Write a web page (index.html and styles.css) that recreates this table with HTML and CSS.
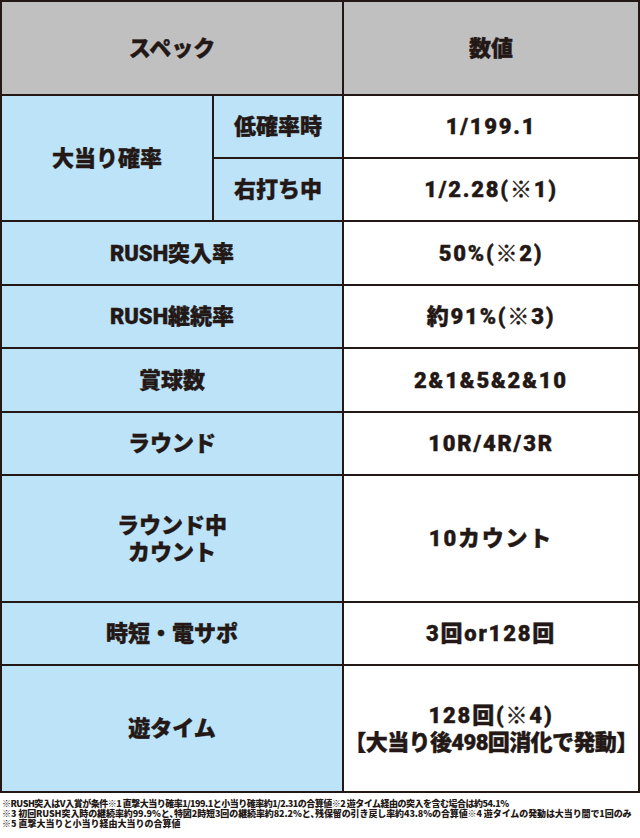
FILE: index.html
```html
<!DOCTYPE html>
<html lang="ja">
<head>
<meta charset="utf-8">
<title>スペック</title>
<link rel="stylesheet" href="styles.css">
</head>
<body>
<div class="spec">
  <div class="cell head span2">スペック</div>
  <div class="cell head">数値</div>

  <div class="cell label rows2">大当り確率</div>
  <div class="cell label">低確率時</div>
  <div class="cell value">1/199.1</div>
  <div class="cell label">右打ち中</div>
  <div class="cell value">1/2.28(※1)</div>

  <div class="cell label span2">RUSH突入率</div>
  <div class="cell value">50%(※2)</div>

  <div class="cell label span2">RUSH継続率</div>
  <div class="cell value">約91%(※3)</div>

  <div class="cell label span2">賞球数</div>
  <div class="cell value">2&amp;1&amp;5&amp;2&amp;10</div>

  <div class="cell label span2">ラウンド</div>
  <div class="cell value">10R/4R/3R</div>

  <div class="cell label span2"><div class="lines">ラウンド中<br>カウント</div></div>
  <div class="cell value">10カウント</div>

  <div class="cell label span2">時短・電サポ</div>
  <div class="cell value">3回or128回</div>

  <div class="cell label span2">遊タイム</div>
  <div class="cell value"><div class="lines">128回(※4)<br><span class="tight">【大当り後498回消化で発動】</span></div></div>
</div>
<div class="notes">
  <p class="n1">※RUSH突入はV入賞が条件※1 直撃大当り確率1/199.1と小当り確率約1/2.31の合算値※2 遊タイム経由の突入を含む場合は約54.1%</p>
  <p class="n2">※3 初回RUSH突入時の継続率約99.9%と､特図2時短3回の継続率約82.2%と､残保留の引き戻し率約43.8%の合算値※4 遊タイムの発動は大当り間で1回のみ</p>
  <p class="n3">※5 直撃大当りと小当り経由大当りの合算値</p>
</div>
</body>
</html>
```

FILE: styles.css
```css
html, body {
  margin: 0;
  padding: 0;
  background: #ffffff;
}

body {
  width: 640px;
  height: 838px;
  overflow: hidden;
  font-family: "Noto Sans CJK JP", "Noto Sans", sans-serif;
  color: #231815;
}

.spec {
  display: grid;
  grid-template-columns: 210px 128px 294px;
  grid-template-rows: 92px 61px 61px 62px 61px 62px 61px 125px 61px 125px;
  gap: 2px;
  padding: 2px;
  background: #231815;
  width: 636px;
}

.cell {
  display: flex;
  align-items: center;
  justify-content: center;
  text-align: center;
  font-family: Roboto, "Noto Sans CJK JP", sans-serif;
  font-weight: 900;
  font-size: 22px;
  line-height: 27px;
  -webkit-text-stroke: 0.4px #231815;
}

.lines {
  text-align: center;
}

.head {
  background: #c0c0c0;
}

.label {
  background: #bde3f8;
}

.value {
  background: #ffffff;
  letter-spacing: 1.8px;
}

.span2 {
  grid-column: span 2;
}

.rows2 {
  grid-row: span 2;
}

.tight {
  letter-spacing: -0.6px;
  white-space: nowrap;
}

.notes {
  margin-top: 6px;
  padding-left: 2px;
  font-family: "Noto Sans CJK JP", sans-serif;
  font-weight: 900;
  font-size: 9px;
  line-height: 10px;
  color: #231815;
  white-space: nowrap;
}

.notes p {
  margin: 0;
}

.notes .n1 {
  letter-spacing: -0.5px;
}

.notes .n2 {
  letter-spacing: -0.1px;
}
```
